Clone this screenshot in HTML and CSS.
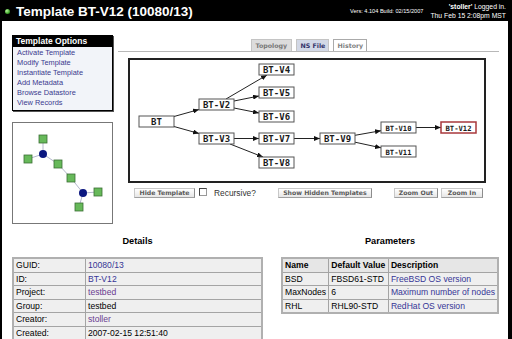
FILE: index.html
```html
<!DOCTYPE html>
<html lang="en">

<head>
  <meta charset="UTF-8">
  <title>Template BT-V12 (10080/13)</title>
  <link rel="stylesheet" href="styles.css">
</head>

<body>
  <header class="topbar">
    <div class="title"><span class="dot"></span>Template BT-V12 (10080/13)</div>
    <div class="version">Vers: 4.104 Build: 02/15/2007</div>
    <div class="login"><b>'stoller'</b> Logged in.<br>Thu Feb 15 2:08pm MST</div>
  </header>

  <div class="content">
    <div class="main">
      <aside class="side">
        <div class="menu">
          <div class="menu-title">Template Options</div>
          <a href="#">Activate Template</a>
          <a href="#">Modify Template</a>
          <a href="#">Instantiate Template</a>
          <a href="#">Add Metadata</a>
          <a href="#">Browse Datastore</a>
          <a href="#">View Records</a>
        </div>

        <div class="thumb">
          <svg width="99" height="99" viewBox="0 0 99 99">
            <g class="thumb-links">
              <line x1="30" y1="16" x2="30" y2="31" />
              <line x1="30" y1="31" x2="15" y2="36" />
              <line x1="30" y1="31" x2="45" y2="41" />
              <line x1="45" y1="41" x2="58" y2="55" />
              <line x1="58" y1="55" x2="70" y2="70" />
              <line x1="70" y1="70" x2="85" y2="69" />
              <line x1="70" y1="70" x2="66" y2="84" />
            </g>
            <g class="thumb-nodes">
              <rect x="26" y="12" width="8" height="8" />
              <rect x="11" y="32" width="8" height="8" />
              <rect x="41" y="37" width="8" height="8" />
              <rect x="54" y="51" width="8" height="8" />
              <rect x="81" y="65" width="8" height="8" />
              <rect x="62" y="80" width="8" height="8" />
            </g>
            <g class="thumb-lans">
              <circle cx="30" cy="31" r="4" />
              <circle cx="70" cy="70" r="4" />
            </g>
          </svg>
        </div>
      </aside>

      <section class="viewer">
        <div class="tabs">
          <span class="tab tab-topology">Topology</span>
          <span class="tab tab-ns">NS File</span>
          <span class="tab tab-history">History</span>
        </div>

        <div class="graph">
          <svg width="354" height="121" viewBox="0 0 354 121">
            <defs>
              <marker id="arrow" markerWidth="6" markerHeight="5" refX="6" refY="2.5" orient="auto" markerUnits="userSpaceOnUse">
                <path d="M0,0 L6,2.5 L0,5 z" fill="#111" />
              </marker>
            </defs>
            <g class="edges">
              <line x1="44" y1="56.5" x2="69" y2="49.5" />
              <line x1="44" y1="66.5" x2="69" y2="73.5" />
              <line x1="96" y1="39" x2="137" y2="15" />
              <line x1="104" y1="41" x2="129" y2="36" />
              <line x1="104" y1="48" x2="129" y2="53" />
              <line x1="104" y1="78.5" x2="129" y2="78.5" />
              <line x1="100" y1="84" x2="133" y2="97" />
              <line x1="164" y1="78.5" x2="190" y2="78.5" />
              <line x1="225" y1="75.3" x2="251" y2="70.7" />
              <line x1="225" y1="82.2" x2="251" y2="87.8" />
              <line x1="286" y1="67.5" x2="311" y2="67.5" />
            </g>
            <g class="nodes">
              <rect x="9" y="56" width="35" height="11" /><text x="26.5" y="65">BT</text>
              <rect x="69" y="39" width="35" height="11" /><text x="86.5" y="48">BT-V2</text>
              <rect x="69" y="73" width="35" height="11" /><text x="86.5" y="82">BT-V3</text>
              <rect x="129" y="4" width="35" height="11" /><text x="146.5" y="13">BT-V4</text>
              <rect x="129" y="27" width="35" height="11" /><text x="146.5" y="36">BT-V5</text>
              <rect x="129" y="51" width="35" height="11" /><text x="146.5" y="60">BT-V6</text>
              <rect x="129" y="73" width="35" height="11" /><text x="146.5" y="82">BT-V7</text>
              <rect x="129" y="97" width="35" height="11" /><text x="146.5" y="106">BT-V8</text>
              <rect x="190" y="73" width="35" height="11" /><text x="207.5" y="82">BT-V9</text>
              <rect x="251" y="62" width="35" height="11" /><text class="small" x="268.5" y="70.5">BT-V10</text>
              <rect x="251" y="86" width="35" height="11" /><text class="small" x="268.5" y="94.5">BT-V11</text>
              <rect class="current" x="311" y="62" width="35" height="11" /><text class="small" x="328.5" y="70.5">BT-V12</text>
            </g>
          </svg>
        </div>

        <div class="controls">
          <button class="btn btn-hide">Hide Template</button>
          <label class="recursive"><span class="check"></span>Recursive?</label>
          <button class="btn btn-show">Show Hidden Templates</button>
          <button class="btn btn-out">Zoom Out</button>
          <button class="btn btn-in">Zoom In</button>
        </div>
      </section>
    </div>

    <div class="info">
      <div class="details">
        <h2>Details</h2>
        <table>
          <tr><td class="label">GUID:</td><td><a href="#">10080/13</a></td></tr>
          <tr><td class="label">ID:</td><td><a href="#">BT-V12</a></td></tr>
          <tr><td class="label">Project:</td><td><a class="visited" href="#">testbed</a></td></tr>
          <tr><td class="label">Group:</td><td>testbed</td></tr>
          <tr><td class="label">Creator:</td><td><a class="visited" href="#">stoller</a></td></tr>
          <tr><td class="label">Created:</td><td>2007-02-15 12:51:40</td></tr>
        </table>
      </div>

      <div class="params">
        <h2>Parameters</h2>
        <table>
          <tr><th class="c-name">Name</th><th class="c-value">Default Value</th><th>Description</th></tr>
          <tr><td>BSD</td><td>FBSD61-STD</td><td><a href="#">FreeBSD OS version</a></td></tr>
          <tr><td>MaxNodes</td><td>6</td><td><a href="#">Maximum number of nodes</a></td></tr>
          <tr><td>RHL</td><td>RHL90-STD</td><td><a href="#">RedHat OS version</a></td></tr>
        </table>
      </div>
    </div>
  </div>
</body>

</html>
```

FILE: styles.css
```css
body {
  margin: 0;
  background: #000;
  font-family: "Liberation Sans", Arial, sans-serif;
  height: 339px;
  overflow: hidden;
}

a {
  color: #363696;
  text-decoration: none;
}

a.visited {
  color: #6a3c90;
}

/* top bar */
.topbar {
  height: 21px;
  display: flex;
  align-items: center;
  color: #fff;
  padding: 0 6px 0 5px;
}

.title {
  display: flex;
  align-items: center;
  font-size: 13.5px;
  font-weight: bold;
  padding-top: 1px;
}

.dot {
  width: 5px;
  height: 5px;
  border-radius: 50%;
  background: radial-gradient(circle at 35% 35%, #b6f59a, #2f9a1c 70%);
  margin-right: 6px;
}

.version {
  margin-left: auto;
  font-size: 5.6px;
}

.login {
  margin-left: 7px;
  font-size: 6.8px;
  line-height: 9px;
  text-align: right;
}

/* white page */
.content {
  background: #fff;
  margin: 0 4px 0 2px;
  height: 318px;
}

.main {
  display: flex;
}

.side {
  width: 101px;
  margin-left: 10px;
  padding-top: 14px;
}

.menu {
  border: 1px solid #000;
  box-shadow: 1px 1px 0 #555;
  background: #f2f4f9;
  display: flex;
  flex-direction: column;
  padding-bottom: 3px;
  height: 71px;
}

.menu-title {
  background: #000;
  color: #fff;
  font-weight: bold;
  font-size: 8.5px;
  line-height: 11px;
  padding-left: 3px;
  margin-bottom: 1px;
}

.menu a {
  font-size: 7.4px;
  line-height: 10px;
  padding-left: 4px;
  color: #3a3a8e;
}

.thumb {
  margin-top: 11px;
  border: 1px solid #777;
  height: 100px;
}

.thumb svg {
  display: block;
}

.thumb-links line {
  stroke: #b4b8cc;
  stroke-width: 1;
}

.thumb-nodes rect {
  fill: #67b95a;
  stroke: #3b6e34;
  stroke-width: 0.8;
}

.thumb-lans circle {
  fill: #0b1780;
}

/* topology viewer */
.viewer {
  width: 381px;
  margin-left: 5px;
  padding-top: 18px;
}

.tabs {
  display: flex;
  justify-content: center;
  gap: 4px;
  border-bottom: 1px solid #b8b8b8;
  font-family: "DejaVu Sans", Verdana, sans-serif;
  font-size: 6.3px;
  font-weight: bold;
}

.tab {
  height: 11px;
  line-height: 11px;
  padding: 0 4px;
  border: 1px solid #c4c4c4;
  border-bottom: none;
  color: #777;
  white-space: nowrap;
  text-align: center;
}

.tab-topology {
  background: #dcdcdc;
  width: 31px;
}

.tab-ns {
  background: #d2d8e6;
  color: #33336a;
  width: 23px;
}

.tab-history {
  background: #fff;
  color: #808080;
  border-color: #aaa;
  width: 24px;
}

.graph {
  margin: 6px auto 0 10px;
  width: 354px;
  height: 121px;
  border: 2px solid #222;
}

.graph svg {
  display: block;
}

.edges line {
  stroke: #222;
  stroke-width: 1;
  marker-end: url(#arrow);
}

.nodes rect {
  fill: #fff;
  stroke: #555;
  stroke-width: 1;
}

.nodes rect.current {
  stroke: #a8383c;
  stroke-width: 1.5;
}

.nodes text {
  font-family: "DejaVu Sans Mono", monospace;
  font-weight: bold;
  font-size: 9px;
  text-anchor: middle;
  fill: #1a1a1a;
}

.nodes text.small {
  font-size: 7.2px;
}

.controls {
  display: flex;
  align-items: center;
  margin-top: 5px;
  height: 10px;
}

.btn {
  height: 10px;
  padding: 0;
  border: 1px solid #c8c8c8;
  border-right-color: #8c8c8c;
  border-bottom-color: #a0a0a0;
  background: linear-gradient(#fff, #e6e6e6);
  font-family: "DejaVu Sans", Verdana, sans-serif;
  font-size: 6.2px;
  font-weight: bold;
  color: #5a5a5a;
  line-height: 8px;
}

.btn-hide {
  width: 61px;
  margin-left: 16px;
}

.recursive {
  display: flex;
  align-items: center;
  margin-left: 4px;
  font-size: 8.4px;
  color: #333;
}

.check {
  width: 6px;
  height: 6px;
  border: 1px solid #999;
  border-top-color: #444;
  border-left-color: #444;
  margin-right: 7px;
  margin-top: -2px;
}

.btn-show {
  width: 94px;
  margin-left: 22px;
}

.btn-out {
  width: 44px;
  margin-left: 22px;
}

.btn-in {
  width: 42px;
  margin-left: 3px;
}

/* details and parameters */
.info {
  display: flex;
  align-items: flex-start;
  margin-top: 11px;
  padding-left: 10px;
  gap: 18px;
}

.info h2 {
  font-size: 9.2px;
  line-height: 12px;
  margin: 0 0 10px;
  text-align: center;
}

.details {
  width: 251px;
}

.params {
  width: 218px;
}

table {
  border-collapse: collapse;
  width: 100%;
  font-size: 8.6px;
  border: 2px solid #b0b0b0;
}

td,
th {
  border: 1px solid #a4a4a4;
  background: #efefef;
  padding: 0 2px;
  height: 12.6px;
  line-height: 12.6px;
  text-align: left;
  white-space: nowrap;
}

th {
  background: #e6e6e6;
}

td.label {
  width: 67px;
}

.c-name {
  width: 42px;
}

.c-value {
  width: 56px;
}
```
